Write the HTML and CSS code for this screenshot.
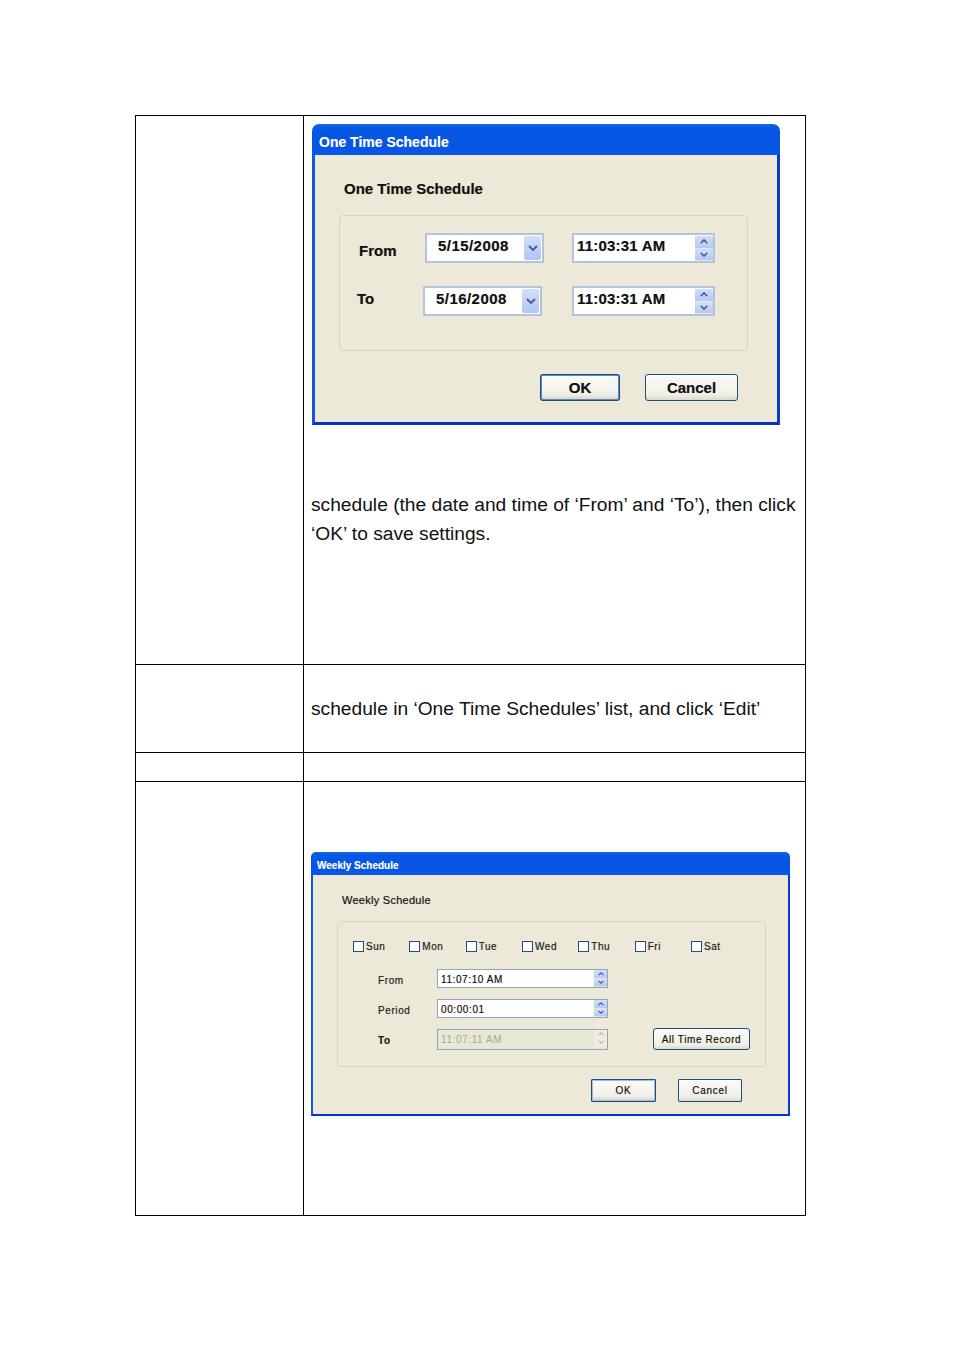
FILE: index.html
```html
<!DOCTYPE html>
<html lang="en">
<head>
<meta charset="utf-8">
<title>Schedule settings</title>
<link rel="stylesheet" href="styles.css">
</head>
<body>
<svg class="defs" width="0" height="0" aria-hidden="true">
  <symbol id="down" viewBox="0 0 10 6"><path d="M1 1l4 4 4-4" fill="none" stroke="#4d6185" stroke-width="2"/></symbol>
  <symbol id="up" viewBox="0 0 10 6"><path d="M1 5l4-4 4 4" fill="none" stroke="#4d6185" stroke-width="2"/></symbol>
</svg>
<main class="table">
  <div class="cell side r1"></div>
  <div class="cell main r1">
    <section class="dialog big">
      <h2 class="title">One Time Schedule</h2>
      <div class="body">
        <h3 class="heading">One Time Schedule</h3>
        <div class="group">
          <div class="row row-from">
            <span class="lbl">From</span>
            <div class="field date"><span>5/15/2008</span><i class="drop"><svg class="chev"><use href="#down"/></svg></i></div>
            <div class="field time"><span>11:03:31 AM</span><i class="spin"><b><svg class="arr"><use href="#up"/></svg></b><b><svg class="arr"><use href="#down"/></svg></b></i></div>
          </div>
          <div class="row row-to">
            <span class="lbl">To</span>
            <div class="field date"><span>5/16/2008</span><i class="drop"><svg class="chev"><use href="#down"/></svg></i></div>
            <div class="field time"><span>11:03:31 AM</span><i class="spin"><b><svg class="arr"><use href="#up"/></svg></b><b><svg class="arr"><use href="#down"/></svg></b></i></div>
          </div>
        </div>
        <div class="actions">
          <button class="btn ok">OK</button>
          <button class="btn cancel">Cancel</button>
        </div>
      </div>
    </section>
    <p class="copy first">schedule (the date and time of ‘From’ and ‘To’), then click<br>‘OK’ to save settings.</p>
  </div>
  <div class="cell side r2"></div>
  <div class="cell main r2"><p class="copy second">schedule in ‘One Time Schedules’ list, and click ‘Edit’</p></div>
  <div class="cell side r3"></div>
  <div class="cell main r3"></div>
  <div class="cell side r4"></div>
  <div class="cell main r4">
    <section class="dialog small">
      <h2 class="title">Weekly Schedule</h2>
      <div class="body">
        <h3 class="heading">Weekly Schedule</h3>
        <div class="group">
          <div class="days">
            <label class="day"><i class="box"></i>Sun</label>
            <label class="day"><i class="box"></i>Mon</label>
            <label class="day"><i class="box"></i>Tue</label>
            <label class="day"><i class="box"></i>Wed</label>
            <label class="day"><i class="box"></i>Thu</label>
            <label class="day"><i class="box"></i>Fri</label>
            <label class="day"><i class="box"></i>Sat</label>
          </div>
          <div class="frow">
            <span class="lbl">From</span>
            <div class="field"><span>11:07:10 AM</span><i class="spin"><b><svg class="arr"><use href="#up"/></svg></b><b><svg class="arr"><use href="#down"/></svg></b></i></div>
          </div>
          <div class="frow">
            <span class="lbl">Period</span>
            <div class="field"><span>00:00:01</span><i class="spin"><b><svg class="arr"><use href="#up"/></svg></b><b><svg class="arr"><use href="#down"/></svg></b></i></div>
          </div>
          <div class="frow last">
            <span class="lbl">To</span>
            <div class="field off"><span>11:07:11 AM</span><i class="spin"><b><svg class="arr"><use href="#up"/></svg></b><b><svg class="arr"><use href="#down"/></svg></b></i></div>
            <button class="btn record">All Time Record</button>
          </div>
        </div>
        <div class="actions">
          <button class="btn ok">OK</button>
          <button class="btn cancel">Cancel</button>
        </div>
      </div>
    </section>
  </div>
</main>
</body>
</html>
```
FILE: styles.css
```css
* { box-sizing: border-box; margin: 0; padding: 0; }
html, body { background: #fff; }
body { height: 1350px; padding: 115px 0 0 135px; font-family: "Liberation Sans", Arial, sans-serif; overflow: hidden; }
.defs { position: absolute; }
i { font-style: normal; display: block; }
svg { display: block; }

.table {
  width: 671px;
  height: 1101px;
  display: grid;
  grid-template-columns: 168px 1fr;
  grid-template-rows: 549px 88px 29px 1fr;
  border: 1px solid #000;
}
.cell { min-width: 0; }
.side { border-right: 1px solid #000; }
.r1, .r2, .r3 { border-bottom: 1px solid #000; }
.main { padding-left: 7px; }

.copy { font-size: 19.2px; line-height: 29px; color: #111; white-space: nowrap; }
.copy.first { margin-top: 65px; }
.copy.second { margin-top: 29px; }

.dialog { background: #ece9d8; border-radius: 7px 7px 0 0; overflow: hidden; color: #111; text-shadow: 0 0 .7px rgba(0, 0, 0, .35); }
.title {
  color: #fff;
  background: linear-gradient(#1a66ec 0, #0758e6 12%, #0654e2 70%, #0a58ea 100%);
  font-weight: 700;
  white-space: nowrap;
  text-shadow: 0 0 .7px rgba(255, 255, 255, .4);
}
.body { border-style: solid; border-color: #0a3fd2 #0a3ccc #0a33bd #1155e2; }
.heading { white-space: nowrap; font-weight: 700; }
.group { border: 1px solid #d6d4c3; border-radius: 4px; }
.field {
  display: flex;
  justify-content: space-between;
  background: #fff;
  border: 1px solid #9db3cf;
  white-space: nowrap;
}
.spin b { display: block; background: linear-gradient(#d3defc, #b3c7f6); }
.btn {
  display: block;
  font-family: inherit;
  font-weight: 700;
  color: #111;
  background: linear-gradient(#fbfbf7, #f0efe6 80%, #dcd8c8);
  border: 1px solid #1c4f7d;
  border-radius: 3px;
  text-shadow: inherit;
}
.actions { display: flex; }

/* One Time Schedule */
.big { width: 468px; height: 301px; margin-left: 1px; margin-top: 8px; }
.big .title { height: 31px; padding: 8px 0 0 7px; font-size: 14px; line-height: 20px; }
.big .body { height: 270px; border-width: 0 3px 3px; padding: 0 0 0 24px; }
.big .heading { height: 60px; padding: 24px 0 0 5px; font-size: 15px; line-height: 20px; }
.big .group { width: 409px; height: 136px; padding-top: 17px; }
.big .row { display: flex; height: 30px; font-weight: 700; }
.big .row-to { margin-top: 23px; padding-left: 17px; }
.big .row-from { padding-left: 19px; }
.big .row-to .time { margin-left: 30px; }
.big .lbl { width: 66px; font-size: 15px; line-height: 20px; }
.big .row-from .lbl { padding-top: 8px; }
.big .row-to .lbl { padding-top: 3px; }
.big .field { height: 30px; padding: 1px 1px 1px 11px; font-size: 15px; line-height: 20px; letter-spacing: .45px; border: 2px solid #b2c4db; }
.big .date { width: 119px; }
.big .time { width: 143px; margin-left: 28px; padding: 1px 0 1px 3px; letter-spacing: .2px; }
.drop { width: 17px; height: 24px; border-radius: 2px; background: linear-gradient(#d3defc, #b1c5f6); display: flex; align-items: center; justify-content: center; }
.chev { width: 10px; height: 6px; }
.big .spin { width: 18px; height: 25px; }
.big .spin b { height: 12.5px; border-bottom: 1px solid #e9e6cf; display: flex; align-items: center; justify-content: center; }
.arr { width: 8px; height: 5px; }
.big .actions { margin: 23px 0 0 201px; gap: 25px; }
.big .btn { height: 27px; font-size: 15px; }
.big .ok { width: 80px; border: 2px solid #5c8bc8; outline: 1px solid #1c4f7d; outline-offset: -1px; }
.big .cancel { width: 93px; }

/* Weekly Schedule */
.small { width: 479px; height: 264px; margin-top: 70px; border-radius: 5px 5px 0 0; }
.small .title { height: 23px; padding: 4px 0 0 6px; font-size: 10px; line-height: 20px; }
.small .body { height: 241px; border-width: 0 2px 2px; padding-left: 24px; }
.small .heading { height: 46px; padding: 15px 0 0 5px; font-size: 11px; line-height: 20px; font-weight: 400; letter-spacing: .27px; }
.small .group { width: 429px; height: 146px; padding: 19px 0 0 0; }
.days { display: grid; grid-template-columns: repeat(7, 56.33px); padding-left: 15px; height: 12px; margin-bottom: 16px; }
.day { display: flex; align-items: center; font-size: 10px; line-height: 10px; padding-bottom: 1px; letter-spacing: .55px; color: #222; white-space: nowrap; }
.box { width: 11px; height: 11px; margin: 0 2px 1px 0; background: #fff; border: 1px solid #1c5180; }
.frow { display: flex; align-items: flex-start; height: 19px; padding-left: 40px; margin-bottom: 11px; }
.frow .lbl { width: 59px; padding-top: 4px; font-size: 10px; line-height: 16px; letter-spacing: .6px; color: #222; }
.frow:first-of-type .lbl { padding-top: 5px; }
.frow .field { width: 171px; height: 19px; padding-left: 3px; font-size: 10px; line-height: 19px; letter-spacing: .6px; border-color: #90a4c2; }
.frow .spin { width: 13px; height: 17px; }
.frow .spin b { height: 8.5px; display: flex; align-items: center; justify-content: center; border-bottom: 1px solid #e9e6cf; }
.frow .arr { width: 6px; height: 4px; }
.frow.last { height: 22px; margin: 0; margin-top: -1px; }
.frow.last .lbl { padding-top: 5px; font-weight: 700; }
.frow.last .field { margin-top: 1px; height: 21px; }
.field.off { background: #e9e7d7; color: #a9a796; text-shadow: none; }
.off .spin b { background: #eeecdf; border-bottom-color: #eeecdf; }
.off .arr { opacity: .35; }
.record { width: 97px; height: 22px; margin-left: 45px; font-size: 10px; font-weight: 400; letter-spacing: .6px; }
.small .actions { margin: 12px 0 0 254px; gap: 22px; }
.small .btn.ok, .small .btn.cancel { height: 23px; font-size: 10px; font-weight: 400; letter-spacing: .7px; border-radius: 1px; }
.small .btn.ok { width: 65px; border: 2px solid #9db9e8; outline: 1px solid #1c4f7d; outline-offset: -1px; }
.small .btn.cancel { width: 64px; }
```
